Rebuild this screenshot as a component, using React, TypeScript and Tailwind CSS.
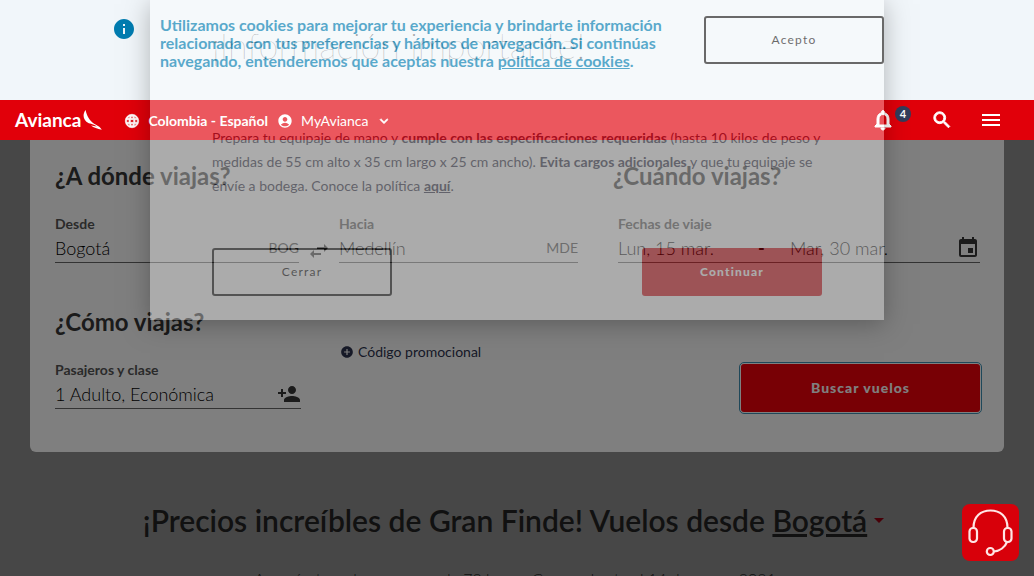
import React from "react";
import {
  MdInfo,
  MdLanguage,
  MdAccountCircle,
  MdExpandMore,
  MdNotificationsNone,
  MdSearch,
  MdMenu,
  MdSwapHoriz,
  MdEvent,
  MdPersonAdd,
  MdAddCircle,
  MdArrowDropDown,
} from "react-icons/md";

function CookieBar() {
  return (
    <section className="h-[100px] bg-[#f1f6fa]">
      <div className="mx-auto flex max-w-[734px] items-start justify-between pt-4">
        <div className="-ml-[38px] flex">
          <MdInfo className="mt-[1px] mr-6 size-6 shrink-0 text-[#007cb0]" />
          <p className="max-w-[520px] text-base leading-[18px] font-bold text-[#007cb0]">
            Utilizamos cookies para mejorar tu experiencia y brindarte información relacionada con tus preferencias y
            hábitos de navegación. Si continúas navegando, entenderemos que aceptas nuestra{" "}
            <a href="#cookies" className="underline">
              política de cookies
            </a>
            .
          </p>
        </div>
        <button className="h-12 w-[180px] rounded-[3px] border-2 border-[#1b1b1b] text-xs tracking-widest text-[#1b1b1b]">
          Acepto
        </button>
      </div>
    </section>
  );
}

function Logo() {
  return (
    <a href="#inicio" className="flex items-center text-[19px] font-bold text-white">
      Avianca
      <svg viewBox="0 0 20 22" className="ml-0.5 h-[22px] w-5" fill="currentColor" aria-hidden="true">
        <path d="M2.600 1C-.2 4.500-.2 9.500 3.400 12.800L5.800 14.200C9 15 11.500 15.400 13.800 17.400L8 16.600C10.500 18.600 14.500 20 18.800 20.700C17.500 18.500 15.500 17 12.500 15.500L11.500 15.100C6.500 11.500 3.800 7 2.600 1Z" />
      </svg>
    </a>
  );
}

const boldIconClass = "[&>path:first-child]:stroke-none";

function Header() {
  return (
    <header className="flex h-10 items-center justify-between bg-[#e1000a] pr-[31px] pl-[15px] text-sm text-white">
      <div className="flex items-center">
        <Logo />
        <button className="ml-[21px] flex items-center pt-0.5 font-bold">
          <MdLanguage strokeWidth="1" className={"mr-2 size-4 " + boldIconClass} />
          Colombia - Español
        </button>
        <button className="ml-[9px] flex items-center pt-0.5">
          <MdAccountCircle className="mr-2 size-4" />
          MyAvianca
          <MdExpandMore strokeWidth="1" className={"ml-2 size-4 " + boldIconClass} />
        </button>
      </div>
      <div className="flex items-center">
        <button aria-label="Notificaciones" className="relative">
          <MdNotificationsNone strokeWidth="1" className={"size-6 " + boldIconClass} />
          <span className="absolute -top-0.5 left-6 flex size-4 items-center justify-center rounded-full bg-[#343d5b] text-[11px] font-bold">
            4
          </span>
        </button>
        <button aria-label="Buscar" className="ml-9">
          <MdSearch strokeWidth="1" className={"size-[22px] " + boldIconClass} />
        </button>
        <button aria-label="Menú" className="ml-[26px]">
          <MdMenu className="size-6" />
        </button>
      </div>
    </header>
  );
}

interface FieldProps {
  id: string;
  label: string;
  value: string;
  children?: React.ReactNode;
}

function Field({ id, label, value, children }: FieldProps) {
  return (
    <div className="min-w-0">
      <label htmlFor={id} className="block text-sm leading-5 font-bold text-[#555]">
        {label}
      </label>
      <div className="flex h-[29px] items-center border-b border-[#666]">
        <input
          id={id}
          defaultValue={value}
          className="w-full min-w-0 bg-transparent text-lg font-light text-black outline-none"
        />
        {children}
      </div>
    </div>
  );
}

const headingClass = "text-2xl leading-[30px] font-bold text-[#363636]";

function SearchCard() {
  return (
    <form className="mx-[30px] rounded-b-md bg-white pt-[21px] pr-6 pb-10 pl-[25px]">
      <div className="grid grid-cols-[558fr_367fr]">
        <h2 className={headingClass}>¿A dónde viajas?</h2>
        <h2 className={headingClass}>¿Cuándo viajas?</h2>
      </div>
      <div className="mt-[23px] grid grid-cols-[244fr_40px_239fr_40px_362fr]">
        <Field id="desde" label="Desde" value="Bogotá">
          <span className="text-sm text-[#444]">BOG</span>
        </Field>
        <button type="button" aria-label="Intercambiar" className="mt-6 flex items-center justify-center">
          <MdSwapHoriz className="size-6 text-[#363636]" />
        </button>
        <Field id="hacia" label="Hacia" value="Medellín">
          <span className="text-sm text-[#444]">MDE</span>
        </Field>
        <span />
        <div>
          <label htmlFor="ida" className="block text-sm leading-5 font-bold text-[#555]">
            Fechas de viaje
          </label>
          <div className="flex h-[29px] items-center border-b border-[#666] text-lg font-light">
            <input id="ida" defaultValue="Lun, 15 mar." className="w-[140px] bg-transparent outline-none" />
            <span className="w-8 font-bold">-</span>
            <input
              aria-label="Fecha de regreso"
              defaultValue="Mar, 30 mar."
              className="w-0 flex-1 bg-transparent outline-none"
            />
            <MdEvent className="size-6 text-[#363636]" />
          </div>
        </div>
      </div>
      <h2 className={"mt-11 " + headingClass}>¿Cómo viajas?</h2>
      <div className="mt-[23px] grid grid-cols-[246fr_39px_401fr_239px] items-start">
        <Field id="pasajeros" label="Pasajeros y clase" value="1 Adulto, Económica">
          <MdPersonAdd className="size-6 shrink-0 text-[#363636]" />
        </Field>
        <span />
        <button type="button" className="-mt-[18px] flex items-center text-sm text-[#2f3550]">
          <MdAddCircle className="mr-1 size-[14px]" />
          Código promocional
        </button>
        <button
          type="submit"
          className="mt-1 h-12 rounded-[3px] bg-[#f0000a] text-sm font-black tracking-[1px] text-white outline-1 outline-offset-1 outline-[#3e91b5]"
        >
          Buscar vuelos
        </button>
      </div>
    </form>
  );
}

function Deals() {
  return (
    <section className="pt-[47px] text-center text-[#222]">
      <h1 className="flex items-center justify-center text-[30px] leading-[42px] font-semibold">
        ¡Precios increíbles de Gran Finde! Vuelos desde&nbsp;
        <button className="flex items-center">
          <span className="underline">Bogotá</span>
          <MdArrowDropDown className="size-6 text-[#900010]" />
        </button>
      </h1>
      <p className="mt-[26px] text-base leading-6 font-light">
        Apresúrate, solo en menos de 72 horas. Compra hasta el 14 de marzo 2021.
      </p>
    </section>
  );
}

function NoticeDialog() {
  return (
    <div className="absolute inset-x-0 top-0 flex justify-center">
      <div
        role="dialog"
        aria-labelledby="aviso"
        className="w-[734px] bg-white px-[62px] pt-[18px] pb-6 opacity-[0.34] shadow-[0_4px_24px_rgba(0,0,0,0.8)]"
      >
        <h2 id="aviso" className="text-4xl leading-[54px] font-extralight text-black">
          ¡Información importante!
        </h2>
        <p className="mt-[54px] text-sm leading-6 text-[#2d2d45]">
          Prepara tu equipaje de mano y <strong>cumple con las especificaciones requeridas</strong> (hasta 10 kilos de
          peso y medidas de 55 cm alto x 35 cm largo x 25 cm ancho). <strong>Evita cargos adicionales</strong> y que tu
          equipaje se envíe a bodega. Conoce la política{" "}
          <a href="#politica" className="font-bold underline">
            aquí
          </a>
          .
        </p>
        <div className="mt-[50px] flex justify-between">
          <button className="h-12 w-[180px] rounded-[3px] border-2 border-black text-xs tracking-widest text-black">
            Cerrar
          </button>
          <button className="h-12 w-[180px] rounded-[3px] bg-[#d8000a] text-xs font-black tracking-widest text-white">
            Continuar
          </button>
        </div>
      </div>
    </div>
  );
}

function ChatButton() {
  return (
    <button
      aria-label="Chat de ayuda"
      className="absolute right-[15px] bottom-[15px] size-[57px] rounded-lg bg-[#d8000a] text-[#ffe5e5]"
    >
      <svg viewBox="0 0 57 57" className="size-full" fill="none" stroke="currentColor" strokeWidth="2.200">
        <path d="M11.500 24C11.500 12 19 6.500 28.500 6.500S45.500 12 45.500 24M45 38C43 43 38 47 32 47.500" />
        <rect x="7.500" y="24" width="7.500" height="14" rx="3.500" />
        <rect x="42" y="24" width="7.500" height="14" rx="3.500" />
        <circle cx="28.300" cy="47.500" r="3.500" />
      </svg>
    </button>
  );
}

export default function App() {
  return (
    <div className="relative h-screen overflow-hidden bg-[#8e8e8e] font-['Lato',sans-serif]">
      <div className="relative z-10">
        <CookieBar />
        <Header />
      </div>
      <main>
        <SearchCard />
        <Deals />
      </main>
      <div className="absolute inset-0 bg-black/50" />
      <div className="absolute inset-0 z-20">
        <NoticeDialog />
        <ChatButton />
      </div>
    </div>
  );
}
